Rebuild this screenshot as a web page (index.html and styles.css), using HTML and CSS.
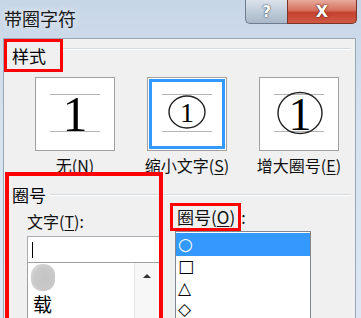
FILE: index.html
```html
<!DOCTYPE html>
<html lang="zh-CN">
<head>
<meta charset="utf-8">
<title>带圈字符</title>
<link rel="stylesheet" href="styles.css">
</head>
<body>
<div class="window">
  <div class="titlebar">
    <div class="title">带圈字符</div>
    <div class="caption-btns">
      <div class="cbtn help">?</div>
      <div class="cbtn close">X</div>
    </div>
  </div>
  <div class="client">
    <div class="group-head">
      <div class="head-label boxed">样式</div>
      <div class="rule"></div>
    </div>
    <div class="previews">
      <div class="pcol">
        <div class="pbox">
          <svg width="78" height="72" viewBox="0 0 78 72">
            <line x1="14" y1="16.5" x2="64" y2="16.5" class="gl"/>
            <line x1="14" y1="53.5" x2="64" y2="53.5" class="gl"/>
            <text x="39" y="53" class="dig" font-size="50">1</text>
          </svg>
        </div>
        <div class="plabel">无(<u>N</u>)</div>
      </div>
      <div class="pcol">
        <div class="pbox sel">
          <svg width="78" height="72" viewBox="0 0 78 72">
            <line x1="14" y1="16.5" x2="64" y2="16.5" class="gl"/>
            <line x1="14" y1="53.5" x2="64" y2="53.5" class="gl"/>
            <ellipse cx="39" cy="34" rx="18" ry="16" class="ring"/>
            <text x="39" y="44" class="dig" font-size="28">1</text>
          </svg>
        </div>
        <div class="plabel">缩小文字(<u>S</u>)</div>
      </div>
      <div class="pcol">
        <div class="pbox">
          <svg width="78" height="72" viewBox="0 0 78 72">
            <line x1="14" y1="16.5" x2="64" y2="16.5" class="gl"/>
            <line x1="14" y1="53.5" x2="64" y2="53.5" class="gl"/>
            <ellipse cx="40" cy="35" rx="22" ry="20.5" class="ring"/>
            <text x="40" y="52" class="dig" font-size="46">1</text>
          </svg>
        </div>
        <div class="plabel">增大圈号(<u>E</u>)</div>
      </div>
    </div>
    <div class="group-head second">
      <div class="head-label">圈号</div>
      <div class="rule"></div>
    </div>
    <div class="columns">
      <div class="leftcol">
        <div class="field-label">文字(<u>T</u>):</div>
        <div class="input"><span class="caret"></span></div>
        <div class="list">
          <div class="items">
            <div class="item"><span class="blob"></span></div>
            <div class="item zi">载</div>
          </div>
          <div class="scroll"><span class="up"></span></div>
        </div>
      </div>
      <div class="rightcol">
        <div class="field-label2"><span class="boxed2">圈号(<u>O</u>)</span>:</div>
        <div class="listbox">
          <div class="litem selected">○</div>
          <div class="litem">□</div>
          <div class="litem">△</div>
          <div class="litem">◇</div>
        </div>
      </div>
    </div>
    <div class="annot"></div>
  </div>
</div>
</body>
</html>
```
FILE: styles.css
```css
html, body {
  margin: 0;
  padding: 0;
  background: #dae5f1;
}
.window {
  width: 361px;
  height: 318px;
  overflow: hidden;
  display: flex;
  flex-direction: column;
  background: linear-gradient(180deg, #c7d6e7 0%, #d6e2ef 40%, #dce7f3 100%);
  font-family: "Noto Sans CJK SC", "Noto Sans", sans-serif;
  color: #000;
}
.titlebar {
  height: 38px;
  flex: none;
  display: flex;
  align-items: flex-start;
}
.title {
  padding: 6px 0 0 4px;
  font-size: 18px;
  line-height: 24px;
  color: #1a1a1a;
  text-shadow: 0 0 6px rgba(255,255,255,0.9);
}
.caption-btns {
  margin-left: auto;
  margin-right: 4px;
  display: flex;
  height: 24px;
}
.cbtn {
  height: 23px;
  display: flex;
  align-items: center;
  justify-content: center;
  font-family: "DejaVu Sans", sans-serif;
  font-weight: bold;
  color: #fff;
  border: 1px solid #6d7c8e;
  border-top: none;
}
.help {
  width: 41px;
  border-radius: 0 0 0 5px;
  border-right: none;
  background: linear-gradient(180deg, #dbe3ec 0%, #bfccd9 50%, #a9b8c8 100%);
  font-size: 15px;
  text-shadow: 0 0 2px #42505f, 0 0 1px #42505f;
}
.close {
  width: 68px;
  border-radius: 0 0 5px 0;
  border-color: #7a3328;
  background: linear-gradient(180deg, #e6aa9c 0%, #d5705d 45%, #c4412f 55%, #cf5a43 100%);
  font-size: 16px;
  text-shadow: 0 0 2px #5b1c12, 0 0 1px #5b1c12;
}
.client {
  position: relative;
  flex: 1;
  margin: 0 5px 0 3px;
  border: 1px solid #9aa6b4;
  border-bottom: none;
  background: #f0f0f0;
}
.group-head {
  display: flex;
  align-items: center;
}
.head-label {
  font-size: 17px;
  line-height: 20px;
}
.boxed {
  border: 3px solid #ff0000;
  padding-left: 5px;
  padding-top: 1px;
  box-sizing: content-box;
  display: flex;
  align-items: center;
  width: 48px;
  height: 26px;
}
.rule {
  flex: 1;
  height: 1px;
  background: #d5dadf;
  border-bottom: 1px solid #ffffff;
  margin-right: 4px;
}
.group-head .boxed + .rule {
  margin-top: -13px;
}
.previews {
  display: flex;
  padding-left: 15px;
  margin-top: 5px;
}
.pcol {
  width: 112px;
  display: flex;
  flex-direction: column;
  align-items: center;
}
.pbox {
  width: 78px;
  height: 72px;
  border: 1px solid #a0a0a0;
  background: #fff;
}
.pbox svg {
  display: block;
}
.pbox.sel {
  box-shadow: inset 0 0 0 1px #ffffff, inset 0 0 0 4px #3399ff;
}
.gl {
  stroke: #b4b4b4;
  stroke-width: 1;
}
.ring {
  fill: none;
  stroke: #222;
  stroke-width: 1.4;
}
.dig {
  font-family: "Liberation Serif", serif;
  text-anchor: middle;
  fill: #000;
}
.plabel {
  margin-top: 4px;
  font-size: 16px;
  line-height: 20px;
  color: #111;
  white-space: nowrap;
}
.plabel u, .field-label u, .field-label2 u {
  text-decoration-thickness: 1px;
  text-underline-offset: 2px;
}
.group-head.second {
  margin-top: 9px;
  padding-left: 8px;
  height: 22px;
}
.group-head.second .rule {
  margin-left: 4px;
}
.columns {
  display: flex;
  margin-top: 4px;
}
.leftcol {
  width: 133px;
  margin-left: 23px;
  display: flex;
  flex-direction: column;
}
.field-label {
  font-size: 16px;
  line-height: 22px;
  height: 26px;
  color: #111;
}
.input {
  height: 25px;
  background: #fff;
  border: 1px solid #abadb3;
  border-bottom: none;
  display: flex;
  align-items: center;
  padding-left: 4px;
}
.caret {
  width: 1px;
  height: 16px;
  background: #000;
}
.list {
  height: 60px;
  display: flex;
  border: 1px solid #a0a0a0;
  background: #fff;
}
.items {
  flex: 1;
  padding-left: 3px;
}
.item {
  height: 28px;
  display: flex;
  align-items: center;
}
.blob {
  width: 24px;
  height: 27px;
  border-radius: 11px;
  background: radial-gradient(circle at 60% 55%, #c4c4c4 0%, #c9c9c9 55%, #dcdcdc 85%, #f2f2f2 100%);
}
.zi {
  font-size: 19px;
  padding-left: 2px;
  height: 24px;
}
.scroll {
  width: 24px;
  background: #f7f7f7;
  border-left: 1px solid #e6e6e6;
  display: flex;
  justify-content: center;
}
.up {
  margin-top: 11px;
  width: 0;
  height: 0;
  border-left: 4px solid transparent;
  border-right: 4px solid transparent;
  border-bottom: 4px solid #333;
}
.rightcol {
  margin-left: 10px;
  display: flex;
  flex-direction: column;
}
.field-label2 {
  font-size: 16px;
  line-height: 22px;
  margin-top: -7px;
  color: #111;
  white-space: nowrap;
}
.boxed2 {
  display: inline-block;
  border: 3px solid #ff0000;
  padding: 0 3px 0 4px;
  height: 22px;
  font-size: 17px;
}
.listbox {
  margin-left: 5px;
  width: 134px;
  height: 90px;
  border: 1px solid #828790;
  background: #fff;
  padding-top: 1px;
}
.litem {
  height: 21.5px;
  line-height: 21px;
  padding-left: 2px;
  font-family: "DejaVu Sans", sans-serif;
  font-size: 17px;
  color: #000;
}
.litem.selected {
  background: #3399ff;
  color: #fff;
  height: 23px;
  line-height: 23px;
}
.annot {
  position: absolute;
  left: 1px;
  top: 133px;
  width: 150px;
  height: 200px;
  border: 4px solid #ff0000;
}
```
